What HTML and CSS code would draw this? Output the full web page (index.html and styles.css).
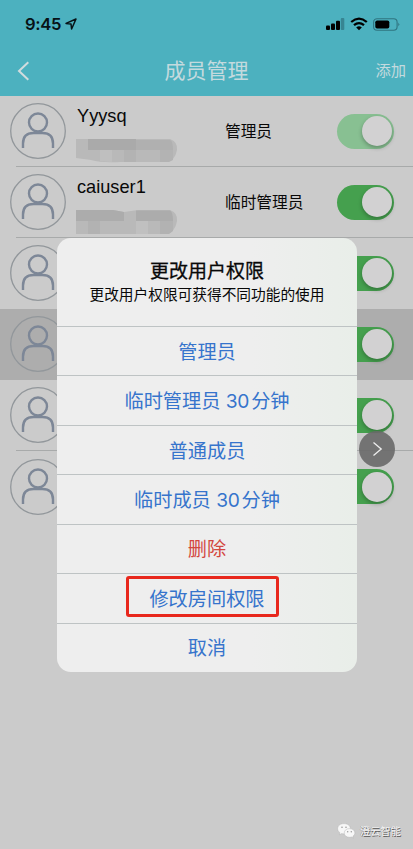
FILE: index.html
```html
<!DOCTYPE html>
<html lang="zh-CN">
<head>
<meta charset="utf-8">
<title>成员管理</title>
<link rel="stylesheet" href="styles.css">
</head>
<body>
<svg width="0" height="0" class="defs">
  <symbol id="avatar" viewBox="0 0 56 56">
    <circle cx="28" cy="28" r="27.3" fill="none" stroke="#92979b" stroke-width="1.3"/>
    <g fill="none" stroke="#7d8797" stroke-width="2.4">
      <circle cx="28" cy="19.500" r="9"/>
      <path d="M13 45V40.500Q13 30 23.500 30H32.500Q43 30 43 40.500V45"/>
    </g>
  </symbol>
  <symbol id="mosaic" viewBox="0 0 102 25">
    <path fill="#b9b9b9" d="M0 1H94Q102 4 101 12 99 23 90 24H45Q25 25 15 22L0 20Z"/>
    <path fill="#aaa" d="M12 1H60V12H12Z"/>
    <path fill="#b0b0b0" d="M60 2H94Q97 3 97 12H60Z"/>
    <path fill="#b3b3b3" d="M48 12H60V24H48ZM84 12H97V22L93 24H84Z"/>
    <path fill="#bfbfbf" d="M24 12H36V24L24 23Z"/>
  </symbol>
  <symbol id="mosaic-wide" viewBox="0 0 102 25">
    <path fill="#b9b9b9" d="M0 1H37L48 3 62 1H94Q102 4 101 12 99 24 90 25H0Z"/>
    <path fill="#acacac" d="M0 1H37L48 3V12H0ZM60 1.500H94Q97 3 97 12H60Z"/>
    <path fill="#b2b2b2" d="M12 12H24V25H12ZM84 12H97V22L93 25H84Z"/>
    <path fill="#c0c0c0" d="M60 12H72V25H60Z"/>
  </symbol>
</svg>
<div class="screen">
  <header class="header">
    <div class="status">
      <span class="time">9:45</span>
      <svg class="locate" width="12" height="12" viewBox="0 0 12 12"><path d="M1 5.4 11 1 6.6 11 6 6Z" fill="none" stroke="#071216" stroke-width="1.5" stroke-linejoin="round"/></svg>
      <svg class="signals" width="76" height="16" viewBox="0 0 76 16">
        <rect x="1" y="9.5" width="4" height="4.5" rx="1"/>
        <rect x="6" y="7.5" width="4" height="6.5" rx="1"/>
        <rect x="11" y="4.8" width="4" height="9.2" rx="1"/>
        <rect x="15.8" y="2" width="3.5" height="12" rx="1" fill="#378592"/>
        <g fill="none" stroke="#000" stroke-width="2.3">
          <path d="M26.2 6Q34 -0.8 41.8 6"/>
          <path d="M29 9.2Q34 5 39 9.2"/>
        </g>
        <path d="M31.2 11.5Q34 9 36.8 11.5L34 14.2Z"/>
        <rect x="48.6" y="2.7" width="23.5" height="11.5" rx="3.5" fill="none" stroke="#2f7480" stroke-width="1.1"/>
        <rect x="50.3" y="4.4" width="14" height="8.2" rx="1.8"/>
        <path d="M73.5 6.5Q75.2 8.4 73.5 10.3Z" fill="#245b65"/>
      </svg>
    </div>
    <nav class="nav">
      <svg class="back" width="13" height="20" viewBox="0 0 13 20"><path d="M11.3 1.3 2 10 11.3 18.7" fill="none" stroke="#d1dcde" stroke-width="2"/></svg>
      <h1>成员管理</h1>
      <span class="add">添加</span>
    </nav>
  </header>
  <main class="list">
    <div class="row"><svg class="avatar"><use href="#avatar"/></svg><div class="who"><b>Yyysq</b><svg class="mosaic"><use href="#mosaic"/></svg></div><span class="role">管理员</span><i class="switch pale"></i></div>
    <div class="row"><svg class="avatar"><use href="#avatar"/></svg><div class="who"><b>caiuser1</b><svg class="mosaic"><use href="#mosaic-wide"/></svg></div><span class="role">临时管理员</span><i class="switch"></i></div>
    <div class="row plain"><svg class="avatar"><use href="#avatar"/></svg><div class="who"></div><span class="role"></span><i class="switch"></i></div>
    <div class="row active"><svg class="avatar"><use href="#avatar"/></svg><div class="who"></div><span class="role"></span><i class="switch"></i></div>
    <div class="row"><svg class="avatar"><use href="#avatar"/></svg><div class="who"></div><span class="role"></span><i class="switch"></i></div>
    <div class="row plain"><svg class="avatar"><use href="#avatar"/></svg><div class="who"></div><span class="role"></span><i class="switch"></i></div>
  </main>
  <section class="dialog">
    <div class="intro"><h2>更改用户权限</h2><p>更改用户权限可获得不同功能的使用</p></div>
    <div class="option">管理员</div>
    <div class="option">临时管理员 <span>30</span>分钟</div>
    <div class="option">普通成员</div>
    <div class="option">临时成员 <span>30</span>分钟</div>
    <div class="option danger">删除</div>
    <div class="option">修改房间权限<i class="mark"></i></div>
    <div class="option">取消</div>
  </section>
  <div class="next"><svg width="36" height="36" viewBox="0 0 36 36"><path d="M14.500 11.500 22.200 18 14.500 24.500" fill="none" stroke="#eee" stroke-width="1.3"/></svg></div>
  <footer class="brand">
    <svg width="19" height="16" viewBox="0 0 19 16">
      <path fill="#f7f7f7" stroke="#aaa" stroke-width=".4" d="M7 .6C3.2.6.6 2.8.6 5.7c0 1.7.9 3 2.3 4l-.5 2.1 2.3-1.2q1.1.3 2.3.3c3.8 0 6.4-2.2 6.4-5.2C13.400 2.800 10.700.6 7 .6Z"/>
      <path fill="#f7f7f7" stroke="#aaa" stroke-width=".4" d="M12.500 5.600C9.300 5.600 7.200 7.500 7.200 10c0 2.500 2.200 4.300 5.300 4.300q1 0 1.900-.3l2 1.100-.5-1.900c1.200-.8 2-1.900 2-3.200 0-2.500-2.300-4.400-5.400-4.400Z"/>
      <g fill="#999"><circle cx="5" cy="4.300" r=".8"/><circle cx="9" cy="4.300" r=".8"/><circle cx="10.700" cy="8.700" r=".7"/><circle cx="14.300" cy="8.700" r=".7"/></g>
    </svg>
    <span>澄云智能</span>
  </footer>
</div>
</body>
</html>
```

FILE: styles.css
```css
* { box-sizing: border-box; }
body { margin: 0; font-family: Inter, "Noto Sans CJK SC", sans-serif; color: #080808; }
h1, h2, p { margin: 0; font-weight: 400; }
svg { display: block; flex: none; }
.defs { position: absolute; }
.screen { position: relative; width: 413px; height: 849px; overflow: hidden; background: #cbcbcb; }
.header { height: 95.500px; background: #4cb1bf; }
.status { display: flex; align-items: center; height: 47px; padding: 0 12px 0 25px; }
.time { font-size: 16.6px; font-weight: 600; line-height: 20px; letter-spacing: -.3px; color: #071216; }
.locate { margin-left: 4px; }
.signals { margin-left: auto; }
.nav { display: grid; grid-template-columns: 60px 1fr 60px; align-items: center; height: 48px; padding: 0 7px 0 17px; color: #c3dade; }
.nav h1 { font-size: 21px; line-height: 30px; text-align: center; padding-left: 4px; padding-right: 14px; white-space: nowrap; }
.add { font-size: 15.3px; line-height: 22px; text-align: right; }
.list { display: grid; grid-auto-rows: 71.100px; }
.row { display: grid; grid-template-columns: 67px 148px 112px 57px; align-items: center; padding-left: 10px; background: linear-gradient(#a8aaaa, #a8aaaa) 16px 100% / 100% 1px no-repeat; }
.row.plain { background: none; }
.row.active { background: #adadad; }
.avatar { width: 56px; height: 56px; }
.who { display: flex; flex-direction: column; align-self: start; padding-top: 9.500px; }
.who b { font: 400 18.200px/22px "Liberation Sans", sans-serif; }
.mosaic { width: 102px; height: 25px; margin-top: 11px; margin-left: -1px; }
.role { padding-top: 1px; font-size: 15.7px; line-height: 22px; white-space: nowrap; }
.switch { display: flex; justify-content: flex-end; width: 57px; height: 35px; padding: 2.500px; border-radius: 18px; background: #45a04e; }
.switch::after { content: ""; width: 30px; height: 30px; border-radius: 50%; background: #d2d1d2; box-shadow: 0 2px 4px rgba(0,0,0,.28); }
.switch.pale { background: #88c092; }
.dialog { position: absolute; left: 57px; top: 238px; width: 300px; height: 434px; display: grid; grid-template-rows: 88px repeat(7, 1fr); border-radius: 14px; overflow: hidden; background: linear-gradient(90deg, #eee 65%, #e9eee9); text-align: center; }
.intro { padding-top: 19px; }
.intro h2 { font-size: 19px; line-height: 29px; -webkit-text-stroke: .3px #080808; }
.intro p { font-size: 14.7px; line-height: 18px; white-space: nowrap; }
.option { position: relative; display: flex; align-items: center; justify-content: center; padding-top: 1px; border-top: 1px solid #bec3c4; font-size: 19.2px; line-height: 28px; white-space: pre; color: #3674cc; }
.option span { margin-right: 2px; letter-spacing: -.3px; }
.danger { color: #d34740; }
.mark { position: absolute; left: 69px; top: 2px; width: 153px; height: 41px; border: 3px solid #e8271c; border-radius: 3px; }
.next { position: absolute; left: 359px; top: 431px; width: 36px; height: 36px; border-radius: 50%; background: rgba(105,105,105,.9); }
.brand { position: absolute; left: 337px; top: 823px; display: flex; align-items: center; gap: 4px; }
.brand span { font-size: 10.2px; line-height: 16px; color: #f4f4f4; -webkit-text-stroke: .2px #f4f4f4; text-shadow: .8px .8px .5px #555, -.4px -.4px .5px #777; }
```
